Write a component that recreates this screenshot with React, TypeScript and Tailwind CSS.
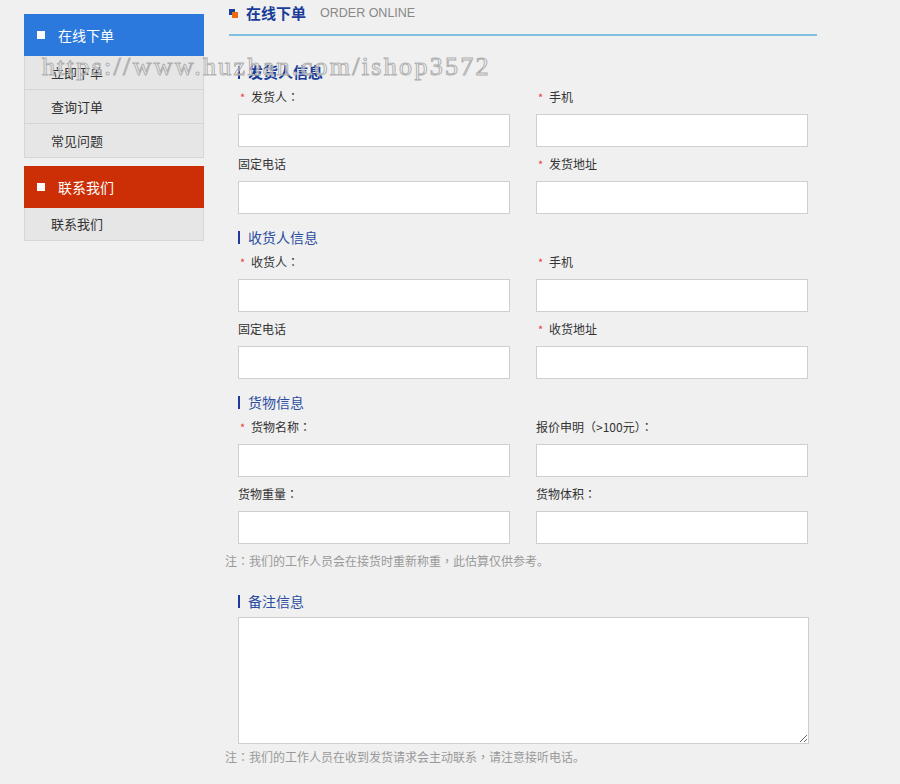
import React from "react";

const CN = { fontFamily: '"Noto Sans CJK SC", "Liberation Sans", sans-serif' };
const TC = { fontFamily: '"Noto Sans CJK TC", "Noto Sans CJK SC", sans-serif' };

function Colonize({ text }: { text: string }) {
  const parts = text.split(/([：，（）])/);
  return (
    <>
      {parts.map((p, i) =>
        /^[：，（）]$/.test(p) ? (
          <span key={i} style={TC}>
            {p}
          </span>
        ) : (
          <React.Fragment key={i}>{p}</React.Fragment>
        )
      )}
    </>
  );
}

function Label({ text, req }: { text: string; req?: boolean }) {
  return (
    <div className="h-[34px] flex items-center text-[12px] text-[#333]" style={CN}>
      {req ? <span className="w-[13px] pl-[2px] text-[#e84040] text-[11px]">*</span> : null}
      <span>
        <Colonize text={text} />
      </span>
    </div>
  );
}

function Field({ text, req }: { text: string; req?: boolean }) {
  return (
    <div className="w-[272px]">
      <Label text={text} req={req} />
      <input className="block w-[272px] h-[33px] bg-white border border-[#cfcfcf] outline-none" />
    </div>
  );
}

function Heading({ text, bold, cls }: { text: string; bold?: boolean; cls: string }) {
  return (
    <div className={`flex items-end ${cls}`}>
      <div className="flex items-center">
        <span className="w-[2px] h-[13px] bg-[#1e3a9a] mr-[8px]" />
        <span
          className={bold ? "text-[15px] leading-[16px] font-bold text-[#1a3d99]" : "text-[14px] leading-[15px] text-[#2c4da0]"}
          style={CN}
        >
          {text}
        </span>
      </div>
    </div>
  );
}

function Grid({ children }: { children: React.ReactNode }) {
  return <div className="grid grid-cols-[272px_272px] gap-x-[26px]">{children}</div>;
}

export default function App() {
  return (
    <div className="relative min-h-[784px] w-[900px] bg-[#f0f0f0] flex" style={CN}>
      {/* Sidebar */}
      <div className="ml-[24px] mt-[14px] w-[180px] shrink-0">
        <div className="h-[42px] bg-[#2b79dc] flex items-center pl-[13px]">
          <span className="w-[8px] h-[8px] bg-white" />
          <span className="ml-[13px] text-white text-[14px] leading-[20px] -mt-[1px]">在线下单</span>
        </div>
        <div className="border-x border-[#d6d6d6] bg-[#e6e6e6]">
          {["立即下单", "查询订单", "常见问题"].map((t) => (
            <div key={t} className="h-[34px] border-b border-[#d6d6d6] flex items-center pl-[26px] text-[13px] text-[#333]">
              {t}
            </div>
          ))}
        </div>
        <div className="mt-[8px] h-[42px] bg-[#cc2e05] flex items-center pl-[13px]">
          <span className="w-[8px] h-[8px] bg-white" />
          <span className="ml-[13px] text-white text-[14px] leading-[20px] -mt-[1px]">联系我们</span>
        </div>
        <div className="border-x border-[#d6d6d6] bg-[#e6e6e6]">
          <div className="h-[33px] border-b border-[#d6d6d6] flex items-center pl-[26px] text-[13px] text-[#333]">联系我们</div>
        </div>
      </div>

      {/* Main */}
      <div className="ml-[21px] w-[592px]">
        <div className="ml-[4px] h-[36px] border-b-2 border-[#7ebfe2]">
          <div className="h-[27px] flex items-center">
            <span className="relative w-[9px] h-[9px] mr-[8px]">
              <span className="absolute left-0 top-0 w-[6px] h-[6px] bg-[#1a3d99]" />
              <span className="absolute left-[3px] top-[3px] w-[6px] h-[6px] bg-[#ee6a12]" />
            </span>
            <span className="text-[15px] font-bold text-[#1a3d99]">在线下单</span>
            <span className="ml-[14px] text-[12.5px] text-[#888]" style={{ fontFamily: '"Liberation Sans", Arial, sans-serif' }}>
              ORDER ONLINE
            </span>
          </div>
        </div>

        <div className="pl-[13px]">
          <Heading text="发货人信息" bold cls="h-[44px]" />
          <Grid>
            <Field text="发货人：" req />
            <Field text="手机" req />
            <Field text="固定电话" />
            <Field text="发货地址" req />
          </Grid>
          <Heading text="收货人信息" cls="h-[31px]" />
          <Grid>
            <Field text="收货人：" req />
            <Field text="手机" req />
            <Field text="固定电话" />
            <Field text="收货地址" req />
          </Grid>
          <Heading text="货物信息" cls="h-[31px]" />
          <Grid>
            <Field text="货物名称：" req />
            <Field text="报价申明（>100元）：" />
            <Field text="货物重量：" />
            <Field text="货物体积：" />
          </Grid>
        </div>
        <div className="h-[34px] flex items-center text-[12px] text-[#999]">
          <span>
            <Colonize text="注：我们的工作人员会在接货时重新称重，此估算仅供参考。" />
          </span>
        </div>
        <div className="pl-[13px]">
          <div className="h-[39px] pt-[16px]">
            <div className="flex items-center">
              <span className="w-[2px] h-[13px] bg-[#1e3a9a] mr-[8px]" />
              <span className="text-[14px] leading-[15px] text-[#2c4da0]">备注信息</span>
            </div>
          </div>
          <textarea className="block w-[571px] h-[127px] bg-white border border-[#cfcfcf] outline-none" />
        </div>
        <div className="h-[26px] flex items-center text-[12px] text-[#999]">
          <span>
            <Colonize text="注：我们的工作人员在收到发货请求会主动联系，请注意接听电话。" />
          </span>
        </div>
      </div>

      {/* Watermark */}
      <div
        className="absolute left-[42px] top-[47px] text-[26px] tracking-[2.3px] text-[rgba(255,255,255,0.45)] [-webkit-text-stroke:1px_#b0b0b0] pointer-events-none whitespace-nowrap"
        style={{ fontFamily: '"Liberation Serif", "Times New Roman", serif' }}
      >
        https://www.huzhan.com/ishop3572
      </div>
    </div>
  );
}
